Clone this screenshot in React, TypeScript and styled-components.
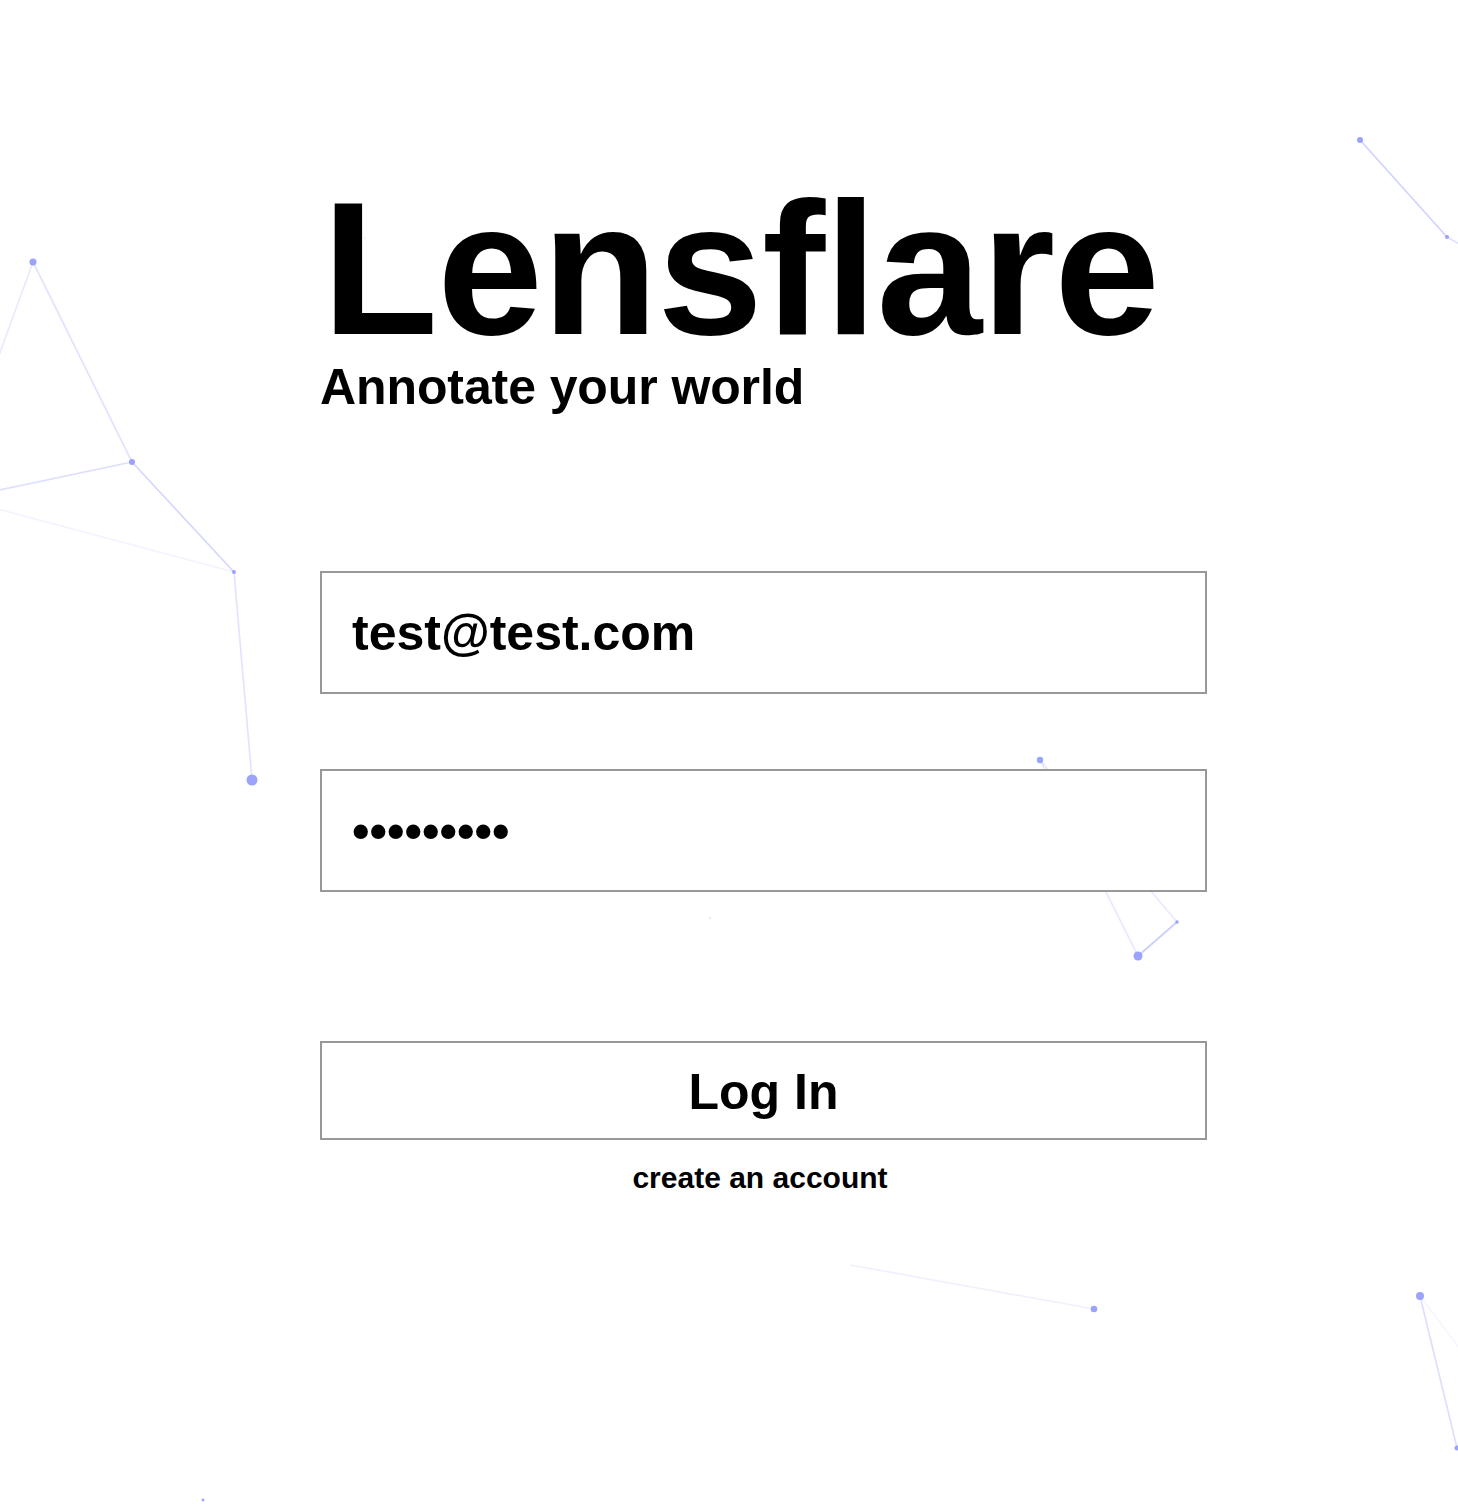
import React from "react";
import styled, { createGlobalStyle } from "styled-components";

const GlobalStyle = createGlobalStyle`
  html, body {
    margin: 0;
    padding: 0;
    background: #ffffff;
  }
  body {
    font-family: "Liberation Sans", Arial, Helvetica, sans-serif;
    color: #000000;
  }
  * { box-sizing: border-box; }
`;

const Page = styled.div`
  position: relative;
  min-height: 1504px;
  overflow: hidden;
  background: #ffffff;
`;

const Backdrop = styled.svg`
  position: absolute;
  top: 0;
  left: 0;
  width: 1458px;
  height: 1504px;
  pointer-events: none;
  z-index: 0;
`;

const Column = styled.main`
  position: relative;
  z-index: 1;
  width: 887px;
  margin-left: 320px;
  padding-top: 174px;
  display: flex;
  flex-direction: column;
`;

const Brand = styled.header`
  display: flex;
  flex-direction: column;
`;

const Title = styled.h1`
  margin: 0 0 0 2px;
  font-size: 190px;
  line-height: 189px;
  font-weight: 700;
  letter-spacing: -0.85px;
`;

const Tagline = styled.h2`
  margin: 0;
  font-size: 50px;
  line-height: 48px;
  font-weight: 700;
  letter-spacing: -0.1px;
`;

const Form = styled.form`
  display: flex;
  flex-direction: column;
  margin-top: 160px;
`;

const Fields = styled.div`
  display: flex;
  flex-direction: column;
  gap: 75px;
`;

const Field = styled.input`
  display: block;
  width: 100%;
  height: 123px;
  margin: 0;
  padding: 0 30px;
  border: 2px solid #989898;
  border-radius: 0;
  background: #ffffff;
  color: #000000;
  font-family: "Liberation Sans", Arial, Helvetica, sans-serif;
  font-size: 50px;
  font-weight: 700;
  outline: none;
  appearance: none;
`;

const SubmitButton = styled.button`
  display: block;
  width: 100%;
  height: 99px;
  margin: 149px 0 0;
  padding: 2px 0 0;
  border: 2px solid #989898;
  border-radius: 0;
  background: #ffffff;
  color: #000000;
  font-family: "Liberation Sans", Arial, Helvetica, sans-serif;
  font-size: 50px;
  font-weight: 700;
  cursor: pointer;
`;

const SignupLink = styled.a`
  display: block;
  margin-top: 21px;
  padding-right: 7px;
  text-align: center;
  color: #000000;
  text-decoration: none;
  font-size: 30px;
  font-weight: 700;
`;

type Dot = { x: number; y: number; r: number; o?: number };
type Link = { x1: number; y1: number; x2: number; y2: number; o: number };

const DOTS: Dot[] = [
  { x: 33, y: 262, r: 3.5 },
  { x: 132, y: 462, r: 3 },
  { x: 234, y: 572, r: 2 },
  { x: 252, y: 780, r: 5.5 },
  { x: 1360, y: 140, r: 3 },
  { x: 1447, y: 237, r: 2 },
  { x: 1040, y: 760, r: 3.2 },
  { x: 1138, y: 956, r: 4.5 },
  { x: 1177, y: 922, r: 1.7 },
  { x: 1094, y: 1309, r: 3.3 },
  { x: 1420, y: 1296, r: 4 },
  { x: 1457, y: 1448, r: 2.5 },
  { x: 203, y: 1500, r: 1.4 },
  { x: 710, y: 918, r: 0.8, o: 0.5 },
  { x: 365, y: 238, r: 0.8, o: 0.3 },
];

const LINKS: Link[] = [
  { x1: 33, y1: 262, x2: -10, y2: 380, o: 0.22 },
  { x1: 33, y1: 262, x2: 132, y2: 462, o: 0.28 },
  { x1: 132, y1: 462, x2: -10, y2: 492, o: 0.32 },
  { x1: 132, y1: 462, x2: 234, y2: 572, o: 0.4 },
  { x1: -10, y1: 507, x2: 234, y2: 572, o: 0.12 },
  { x1: 234, y1: 572, x2: 252, y2: 780, o: 0.28 },
  { x1: 1360, y1: 140, x2: 1447, y2: 237, o: 0.45 },
  { x1: 1447, y1: 237, x2: 1470, y2: 250, o: 0.3 },
  { x1: 1040, y1: 760, x2: 1138, y2: 956, o: 0.22 },
  { x1: 1040, y1: 760, x2: 1177, y2: 922, o: 0.22 },
  { x1: 1138, y1: 956, x2: 1177, y2: 922, o: 0.5 },
  { x1: 850, y1: 1265, x2: 1094, y2: 1309, o: 0.14 },
  { x1: 1420, y1: 1296, x2: 1457, y2: 1448, o: 0.32 },
  { x1: 1420, y1: 1296, x2: 1470, y2: 1362, o: 0.1 },
];

const PARTICLE = "#969efa";

function ParticleField() {
  return (
    <Backdrop viewBox="0 0 1458 1504" aria-hidden="true">
      {LINKS.map((l, i) => (
        <line
          key={`l${i}`}
          x1={l.x1}
          y1={l.y1}
          x2={l.x2}
          y2={l.y2}
          stroke={PARTICLE}
          strokeWidth={1.7}
          strokeOpacity={l.o}
        />
      ))}
      {DOTS.map((d, i) => (
        <circle key={`d${i}`} cx={d.x} cy={d.y} r={d.r} fill={PARTICLE} fillOpacity={d.o ?? 0.95} />
      ))}
    </Backdrop>
  );
}

export default function App() {
  return (
    <>
      <GlobalStyle />
      <Page>
        <ParticleField />
        <Column>
          <Brand>
            <Title>Lensflare</Title>
            <Tagline>Annotate your world</Tagline>
          </Brand>
          <Form onSubmit={(e) => e.preventDefault()}>
            <Fields>
              <Field type="email" defaultValue="test@test.com" aria-label="Email" />
              <Field type="password" defaultValue="123456789" aria-label="Password" />
            </Fields>
            <SubmitButton type="submit">Log In</SubmitButton>
            <SignupLink href="#signup">create an account</SignupLink>
          </Form>
        </Column>
      </Page>
    </>
  );
}
